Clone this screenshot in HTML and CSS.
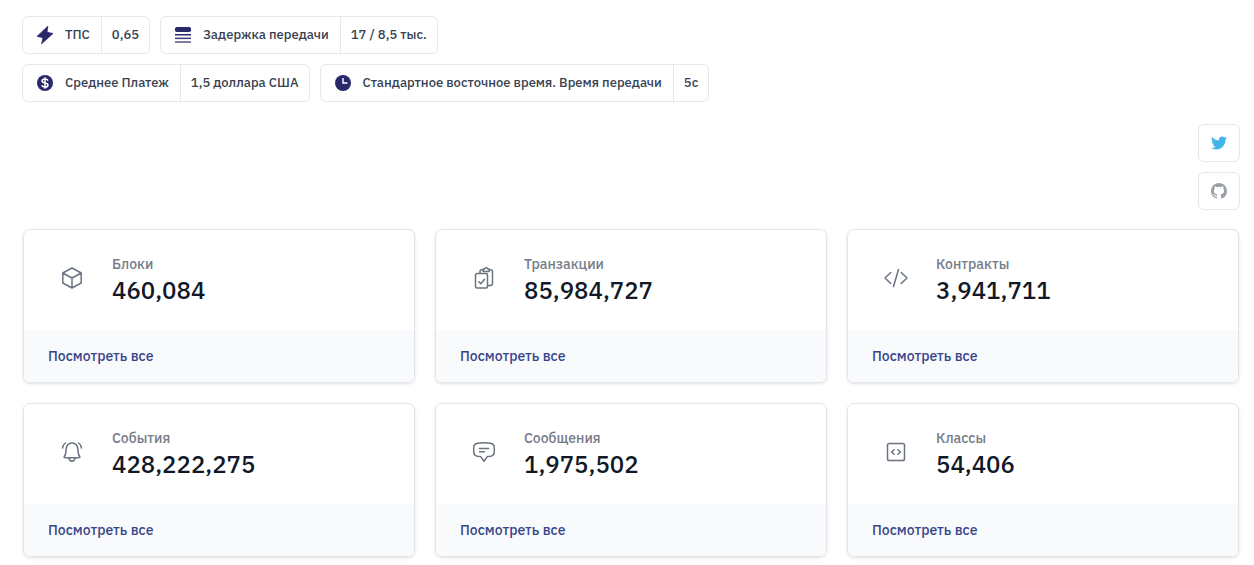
FILE: index.html
```
<!DOCTYPE html>
<html lang="ru">
<head>
<meta charset="utf-8">
<meta name="viewport" content="width=device-width, initial-scale=1">
<title>Статистика</title>
<link rel="stylesheet" href="styles.css">
</head>
<body>
<main class="page">
  <dl class="pills">
    <div class="pill">
      <dt class="pill-label"><svg class="pill-icon" viewBox="0 0 16 16" aria-hidden="true"><path d="M10.800-.8 0 9.400l6 1.200L4.600 16.800 16 6.500l-6-1.200z" stroke="currentColor" stroke-width=".8" stroke-linejoin="round"/></svg>ТПС</dt>
      <dd class="pill-value">0,65</dd>
    </div>
    <div class="pill">
      <dt class="pill-label"><svg class="pill-icon" viewBox="0 0 16 16" aria-hidden="true"><rect y="0" width="16" height="5" rx="1.8"/><rect y="7" width="16" height="1.5"/><rect y="10.6" width="16" height="1.5" opacity=".9"/><rect y="14.2" width="16" height="1.6" opacity=".75"/></svg>Задержка передачи</dt>
      <dd class="pill-value">17 / 8,5 тыс.</dd>
    </div>
    <div class="pill">
      <dt class="pill-label"><svg class="pill-icon" viewBox="0 0 16 16" aria-hidden="true"><circle cx="8" cy="8" r="8"/><path d="M11 5.6C10.5 4.5 9.400 4 8 4 6.200 4 5.100 4.700 5.100 5.900 5.100 8.700 11 7.100 11 10c0 1.300-1.300 2.100-3 2.100-1.600 0-2.800-.6-3.200-1.800M8 2.300v11.400" fill="none" stroke="#fff" stroke-width="1.500"/></svg>Среднее Платеж</dt>
      <dd class="pill-value">1,5 доллара США</dd>
    </div>
    <div class="pill">
      <dt class="pill-label"><svg class="pill-icon" viewBox="0 0 16 16" aria-hidden="true"><circle cx="8" cy="8" r="8"/><path d="M8 3v5h4.500" fill="none" stroke="#fff" stroke-width="1.400"/></svg>Стандартное восточное время. Время передачи</dt>
      <dd class="pill-value">5с</dd>
    </div>
  </dl>

  <nav class="social" aria-label="Социальные сети">
    <a class="social-link twitter" href="#" aria-label="Twitter"><svg viewBox="0 0 24 24" aria-hidden="true"><path d="M23.950 4.570a10 10 0 0 1-2.820.77 4.960 4.960 0 0 0 2.160-2.720c-.95.56-2 .96-3.130 1.180a4.920 4.920 0 0 0-8.380 4.480C7.690 8.100 4.070 6.130 1.640 3.160a4.820 4.820 0 0 0-.67 2.480c0 1.710.87 3.210 2.190 4.100a4.900 4.900 0 0 1-2.230-.62v.06a4.920 4.920 0 0 0 3.950 4.830 5 5 0 0 1-2.210.08 4.940 4.940 0 0 0 4.600 3.420A9.870 9.870 0 0 1 0 19.540a14 14 0 0 0 7.550 2.210c9.050 0 14-7.500 14-13.980 0-.21 0-.42-.02-.63a9.940 9.940 0 0 0 2.460-2.550z"/></svg></a>
    <a class="social-link github" href="#" aria-label="GitHub"><svg viewBox="0 0 16 16" aria-hidden="true"><path d="M8 0C3.580 0 0 3.580 0 8c0 3.540 2.290 6.530 5.470 7.590.4.070.55-.17.55-.38 0-.19-.01-.82-.01-1.490-2.010.37-2.530-.49-2.690-.94-.09-.23-.48-.94-.82-1.130-.28-.15-.68-.52-.01-.53.63-.01 1.080.58 1.230.82.72 1.210 1.870.87 2.330.66.070-.52.28-.87.51-1.070-1.780-.2-3.640-.89-3.640-3.950 0-.87.31-1.590.82-2.150-.08-.2-.36-1.020.08-2.120 0 0 .67-.21 2.200.82a7.500 7.500 0 0 1 4 0c1.530-1.040 2.200-.82 2.200-.82.44 1.100.16 1.920.08 2.120.51.56.82 1.270.82 2.150 0 3.070-1.870 3.750-3.650 3.950.29.25.54.73.54 1.480 0 1.070-.01 1.930-.01 2.200 0 .21.15.46.55.38A8.010 8.010 0 0 0 16 8c0-4.420-3.580-8-8-8z"/></svg></a>
  </nav>

  <section class="cards" aria-label="Показатели сети">
    <article class="card">
      <div class="card-body">
        <svg class="card-icon" viewBox="0 0 24 24" aria-hidden="true"><path d="m12 2 9.200 5v10L12 22l-9.200-5V7zM2.800 7l9.200 5 9.200-5M12 12v10"/></svg>
        <div><h2 class="card-title">Блоки</h2><p class="card-value">460,084</p></div>
      </div>
      <div class="card-footer"><a href="#">Посмотреть все</a></div>
    </article>
    <article class="card">
      <div class="card-body">
        <svg class="card-icon" viewBox="0 0 24 24" aria-hidden="true"><rect x="3.500" y="7.500" width="12" height="14.500" rx="1.500"/><path d="m6.800 15.800 2 1.900 3.800-4.500M8 7.500V5.200a1.500 1.500 0 0 1 1.500-1.500h1.300M17 3.700h1.700A1.800 1.800 0 0 1 20.500 5.500v12a2 2 0 0 1-2 2h-3M11.200 5.500V3h1.300a1.800 1.800 0 0 1 3.400 0h1.300v2.500z"/></svg>
        <div><h2 class="card-title">Транзакции</h2><p class="card-value">85,984,727</p></div>
      </div>
      <div class="card-footer"><a href="#">Посмотреть все</a></div>
    </article>
    <article class="card">
      <div class="card-body">
        <svg class="card-icon" viewBox="0 0 24 24" aria-hidden="true"><path d="M6.800 6.500 1 12l5.800 5.500M17.200 6.500 23 12l-5.800 5.500M14.500 3.500l-5 17"/></svg>
        <div><h2 class="card-title">Контракты</h2><p class="card-value">3,941,711</p></div>
      </div>
      <div class="card-footer"><a href="#">Посмотреть все</a></div>
    </article>
    <article class="card">
      <div class="card-body">
        <svg class="card-icon" viewBox="0 0 24 24" aria-hidden="true"><path d="M4 17.200c1.600-1.800 1.900-4 2-7C6.200 5.800 8.500 3 12 3s5.800 2.800 6 7.200c.1 3 .4 5.200 2 7-1.700.8-14.300.8-16 0M9 18c.2 2 1.300 3.200 3 3.200s2.800-1.200 3-3.200M5.300 3C3.700 4.200 2.900 5.800 2.500 8M18.700 3C20.300 4.200 21.100 5.800 21.500 8"/></svg>
        <div><h2 class="card-title">События</h2><p class="card-value">428,222,275</p></div>
      </div>
      <div class="card-footer"><a href="#">Посмотреть все</a></div>
    </article>
    <article class="card">
      <div class="card-body">
        <svg class="card-icon" viewBox="0 0 24 24" aria-hidden="true"><path d="M5.500 3.200c4-.6 9-.6 13 0 2.400.4 3.500 1.600 3.700 3.800.2 2 .2 3.800 0 5.600-.3 2.300-1.500 3.400-3.700 3.600l-3 .2L12 21.300l-3.500-4.900-3-.2c-2.200-.2-3.400-1.300-3.700-3.600-.2-1.800-.2-3.600 0-5.600.2-2.200 1.300-3.400 3.700-3.800zM7.500 8.500h9M7.500 11.800h5"/></svg>
        <div><h2 class="card-title">Сообщения</h2><p class="card-value">1,975,502</p></div>
      </div>
      <div class="card-footer"><a href="#">Посмотреть все</a></div>
    </article>
    <article class="card">
      <div class="card-body">
        <svg class="card-icon" viewBox="0 0 24 24" aria-hidden="true"><rect x="3.500" y="3.500" width="17" height="17" rx="1.800"/><path d="M10 9.700 7.500 12l2.500 2.300M14 9.700l2.500 2.300-2.500 2.300"/></svg>
        <div><h2 class="card-title">Классы</h2><p class="card-value">54,406</p></div>
      </div>
      <div class="card-footer"><a href="#">Посмотреть все</a></div>
    </article>
  </section>
</main>
</body>
</html>
```
FILE: styles.css
```
* {
  box-sizing: border-box;
}

body {
  margin: 0;
  background: #fff;
  color: #374151;
  font-family: "IBM Plex Sans", "Noto Sans", sans-serif;
}

.page {
  padding: 16px 15px 8px 23px;
}

.pills {
  display: flex;
  flex-wrap: wrap;
  gap: 10px;
  max-width: 704px;
  margin: 0 0 22px -1px;
}

.pill {
  display: flex;
  height: 38px;
  border: 1px solid #e5e7eb;
  border-radius: 6px;
  font-size: 13px;
  font-weight: 500;
  line-height: 20px;
  white-space: nowrap;
}

.pill-label,
.pill-value {
  display: flex;
  align-items: center;
  margin: 0;
  padding: 0 10px;
}

.pill-label {
  gap: 12px;
  padding: 0 11px 0 14px;
}

.pill-value {
  border-left: 1px solid #e5e7eb;
}

.pill-icon {
  width: 16px;
  height: 16px;
  overflow: visible;
  fill: currentColor;
  color: #28286a;
}

.social {
  display: flex;
  flex-direction: column;
  align-items: flex-end;
  gap: 10px;
  margin: 0 -1px 19px 0;
}

.social-link {
  display: grid;
  place-items: center;
  width: 42px;
  height: 38px;
  border: 1px solid #e5e7eb;
  border-radius: 6px;
}

.social-link svg {
  width: 16px;
  height: 16px;
  fill: currentColor;
}

.twitter {
  color: #42b4ea;
}

.github {
  color: #9aa0a8;
}

.cards {
  display: grid;
  grid-template-columns: repeat(3, 1fr);
  gap: 20px;
}

.card {
  overflow: hidden;
  border: 1px solid #e2e5ea;
  border-radius: 7px;
  box-shadow: 0 1px 3px rgba(0, 0, 0, 0.12);
}

.card-body {
  display: flex;
  align-items: center;
  gap: 28px;
  padding: 24px 24px 24px 36px;
}

.card-icon {
  flex: none;
  width: 24px;
  height: 24px;
  margin-bottom: 4px;
  overflow: visible;
  fill: none;
  stroke: #6b7280;
  stroke-width: 1.5;
  stroke-linecap: round;
  stroke-linejoin: round;
}

.card-title {
  margin: 0;
  color: #757b87;
  font-size: 14px;
  font-weight: 500;
  line-height: 20px;
}

.card-value {
  margin: 0;
  color: #111827;
  font-size: 24px;
  font-weight: 500;
  line-height: 32px;
}

.card-footer {
  padding: 16px 24px;
  background: #f9fafb;
  font-size: 14px;
  line-height: 20px;
}

.card-footer a {
  color: #36458a;
  font-weight: 500;
  text-decoration: none;
}
```
